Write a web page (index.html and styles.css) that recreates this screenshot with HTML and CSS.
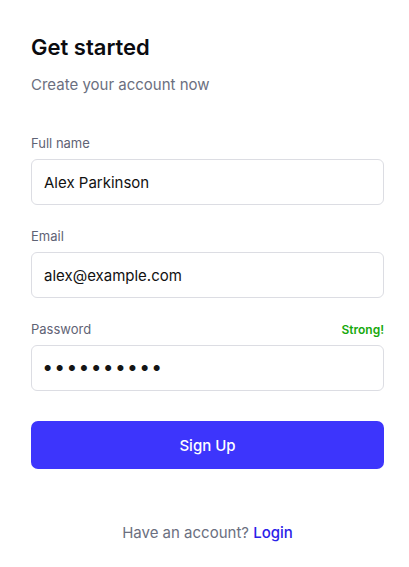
FILE: index.html
```html
<!DOCTYPE html>
<html>
<head>
<meta charset="utf-8">
<link rel="stylesheet" href="styles.css">
</head>
<body>
<div class="page">
  <h1 class="title">Get started</h1>
  <p class="subtitle">Create your account now</p>
  <div class="field">
    <div class="label-row"><span class="label">Full name</span></div>
    <div class="input">Alex Parkinson</div>
  </div>
  <div class="field">
    <div class="label-row"><span class="label">Email</span></div>
    <div class="input">alex@example.com</div>
  </div>
  <div class="field">
    <div class="label-row"><span class="label">Password</span><span class="strong">Strong!</span></div>
    <div class="input dots">●●●●●●●●●●</div>
  </div>
  <button class="btn">Sign Up</button>
  <p class="footer">Have an account? <a class="link">Login</a></p>
</div>
</body>
</html>
```
FILE: styles.css
```css
html, body { margin: 0; padding: 0; background: #fff; }
body { font-family: Inter, "Noto Sans", sans-serif; color: #111; }
.page { margin-left: 31px; width: 353px; padding-top: 33px; display: flex; flex-direction: column; }
.title { margin: 0; font-size: 22px; font-weight: 600; line-height: 28px; color: #0b0b0f; }
.subtitle { margin: 14px 0 0; font-size: 15px; line-height: 20px; color: #6b6f80; }
.field { margin-top: 31px; display: flex; flex-direction: column; }
.field + .field { margin-top: 22px; }
.subtitle + .field { margin-top: 39px; }
.label-row { display: flex; justify-content: space-between; align-items: center; height: 18px; }
.label { font-size: 13px; color: #5f6375; }
.strong { font-size: 12px; font-weight: 600; color: #17a90e; }
.input { margin-top: 7px; height: 44px; border: 1px solid #dcdde3; border-radius: 6px; padding: 0 12px; display: flex; align-items: center; font-size: 15px; color: #111; }
.dots { font-size: 8px; letter-spacing: 4.8px; color: #151515; }
.btn { margin-top: 30px; height: 48px; border: none; border-radius: 7px; background: #3d35fc; color: #fff; font-family: Inter, sans-serif; font-size: 15px; font-weight: 500; }
.footer { margin: 54px 0 0; text-align: center; font-size: 15px; color: #6b6f80; line-height: 20px; }
.link { color: #2a22e8; font-weight: 500; }
```
